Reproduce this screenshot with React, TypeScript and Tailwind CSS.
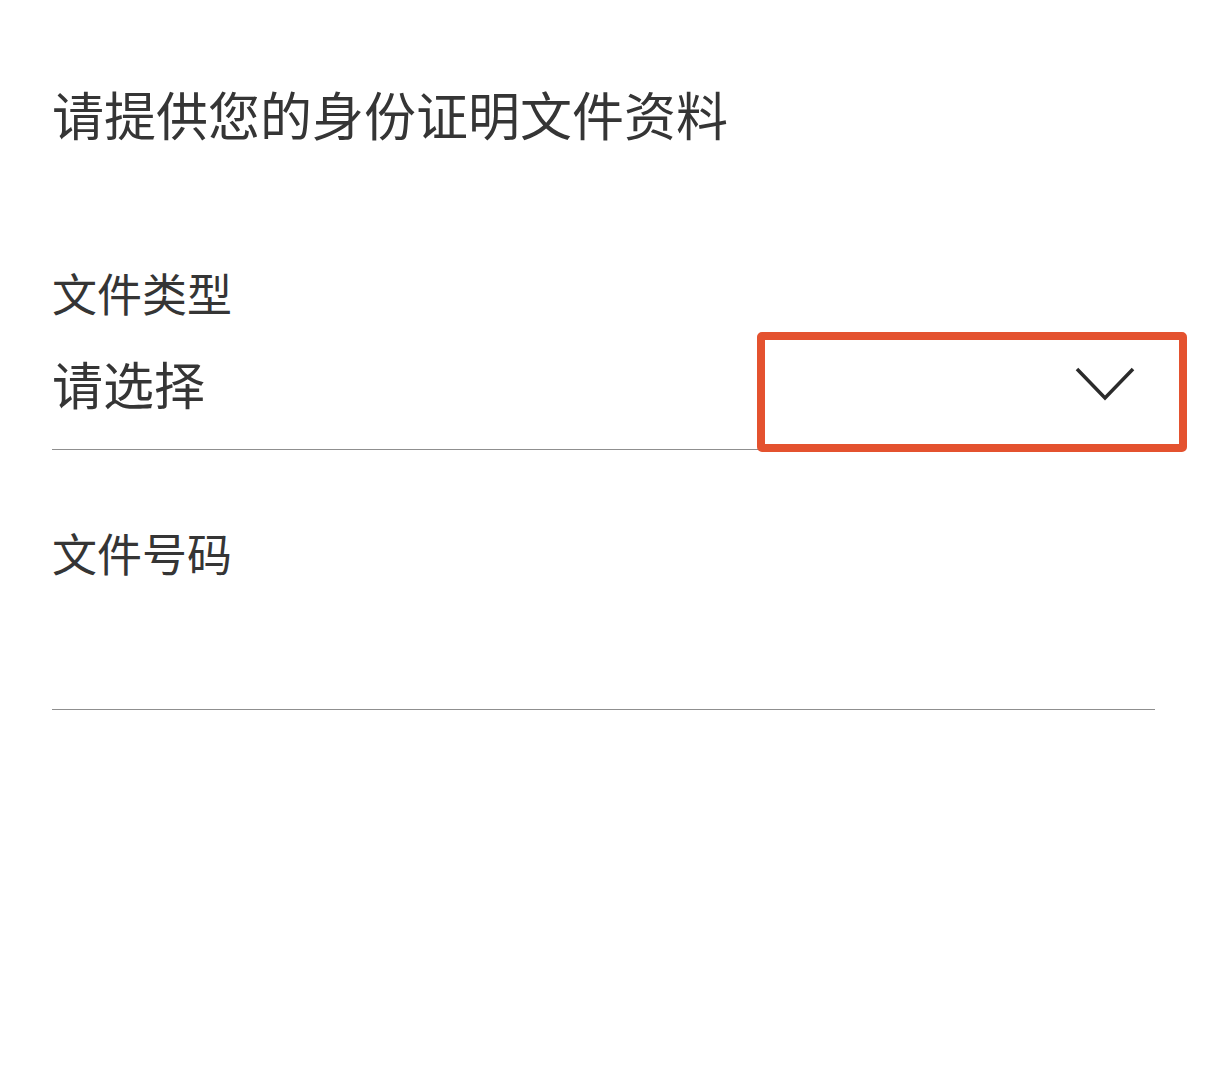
import { useState } from "react"

export default function App() {
    const [docNo, setDocNo] = useState("")

    return (
        <div
            className="relative min-h-screen w-[1206px] h-[1088px] bg-white text-[#353535] px-[52px] pt-[88px]"
            style={{ fontFamily: '"Noto Sans CJK SC", "Noto Sans", sans-serif' }}
        >
            {/* Header */}
            <h1 className="text-[52px] leading-[52px] font-normal">请提供您的身份证明文件资料</h1>

            {/* Document type */}
            <div className="mt-[130px] w-[1103px]">
                <label className="block text-[45px] leading-[45px]">文件类型</label>
                <div className="mt-[43px] flex items-center justify-between border-b border-[#8f8f8f] pb-[40px] pr-[20px]">
                    <span className="text-[51px] leading-[51px]">请选择</span>
                    <svg width="60" height="34" viewBox="0 0 60 34" fill="none" className="text-[#2b2b2b]">
                        <polyline points="2,2 30,31 58,2" stroke="currentColor" strokeWidth="3.5" />
                    </svg>
                </div>
            </div>

            {/* Document number */}
            <div className="mt-[80px] w-[1103px]">
                <label className="block text-[45px] leading-[45px]">文件号码</label>
                <input
                    value={docNo}
                    onChange={(e) => setDocNo(e.target.value)}
                    className="block w-full h-[135px] border-b border-[#8f8f8f] outline-none bg-transparent text-[45px]"
                />
            </div>

            {/* highlight annotation */}
            <div className="absolute left-[757px] top-[332px] w-[430px] h-[120px] border-[8px] border-[#e4522f] rounded-[5px] pointer-events-none" />
        </div>
    )
}
